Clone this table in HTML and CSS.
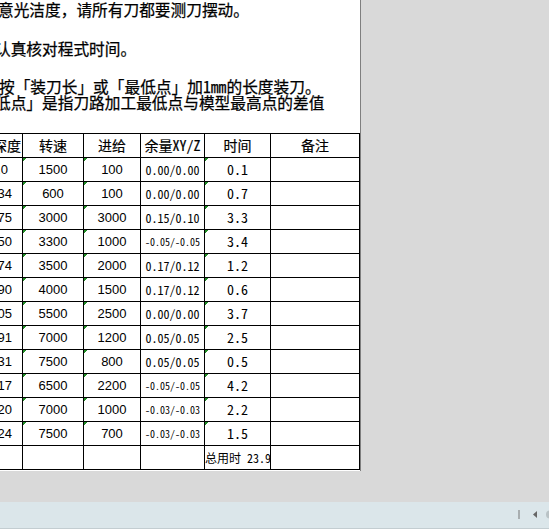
FILE: index.html
```html
<!DOCTYPE html>
<html lang="zh-CN">
<head>
<meta charset="utf-8">
<title>程式单</title>
<link rel="stylesheet" href="styles.css">
</head>
<body>
<div class="app">
  <div class="canvas">
    <div class="page">
      <div class="notes">
        <p class="note l1">意光洁度，请所有刀都要测刀摆动。</p>
        <p class="note l2">认真核对程式时间。</p>
        <p class="note l3">按「装刀长」或「最低点」加1mm的长度装刀。</p>
        <p class="note l4">低点」是指刀路加工最低点与模型最高点的差值</p>
      </div>
      <table class="sheet">
        <colgroup>
          <col class="c1"><col class="c2"><col class="c3"><col class="c4"><col class="c5"><col class="c6">
        </colgroup>
        <thead>
          <tr>
            <th class="first">深度</th><th>转速</th><th>进给</th><th>余量XY/Z</th><th>时间</th><th>备注</th>
          </tr>
        </thead>
        <tbody>
          <tr><td class="first r1">1.0</td><td class="num flag">1500</td><td class="num flag">100</td><td class="mono">0.00/0.00</td><td class="time flag">0.1</td><td></td></tr>
          <tr><td class="first">0.34</td><td class="num flag">600</td><td class="num flag">100</td><td class="mono">0.00/0.00</td><td class="time flag">0.7</td><td></td></tr>
          <tr><td class="first">0.75</td><td class="num flag">3000</td><td class="num flag">3000</td><td class="mono">0.15/0.10</td><td class="time flag">3.3</td><td></td></tr>
          <tr><td class="first">0.50</td><td class="num flag">3300</td><td class="num flag">1000</td><td class="mono small">-0.05/-0.05</td><td class="time flag">3.4</td><td></td></tr>
          <tr><td class="first">0.74</td><td class="num flag">3500</td><td class="num flag">2000</td><td class="mono">0.17/0.12</td><td class="time flag">1.2</td><td></td></tr>
          <tr><td class="first">0.90</td><td class="num flag">4000</td><td class="num flag">1500</td><td class="mono">0.17/0.12</td><td class="time flag">0.6</td><td></td></tr>
          <tr><td class="first">0.05</td><td class="num flag">5500</td><td class="num flag">2500</td><td class="mono">0.00/0.00</td><td class="time flag">3.7</td><td></td></tr>
          <tr><td class="first">0.91</td><td class="num flag">7000</td><td class="num flag">1200</td><td class="mono">0.05/0.05</td><td class="time flag">2.5</td><td></td></tr>
          <tr><td class="first">0.31</td><td class="num flag">7500</td><td class="num flag">800</td><td class="mono">0.05/0.05</td><td class="time flag">0.5</td><td></td></tr>
          <tr><td class="first">0.17</td><td class="num flag">6500</td><td class="num flag">2200</td><td class="mono small">-0.05/-0.05</td><td class="time flag">4.2</td><td></td></tr>
          <tr><td class="first">0.20</td><td class="num flag">7000</td><td class="num flag">1000</td><td class="mono small">-0.03/-0.03</td><td class="time flag">2.2</td><td></td></tr>
          <tr><td class="first">0.24</td><td class="num flag">7500</td><td class="num flag">700</td><td class="mono small">-0.03/-0.03</td><td class="time flag">1.5</td><td></td></tr>
          <tr><td class="first"></td><td></td><td></td><td></td><td class="total">总用时 23.9</td><td></td></tr>
        </tbody>
      </table>
    </div>
  </div>
  <div class="statusbar">
    <span class="sb-sep"></span>
    <svg class="sb-prev" width="4" height="7" viewBox="0 0 4 7"><polygon points="4,0 4,7 0,3.5" fill="#666"/></svg>
    <svg class="sb-next" width="8" height="9" viewBox="0 0 8 9"><circle cx="4" cy="4.5" r="4" fill="#b9c2c5"/></svg>
  </div>
</div>
</body>
</html>
```
FILE: styles.css
```css
html, body {
  margin: 0;
  padding: 0;
}
body {
  width: 549px;
  height: 529px;
  overflow: hidden;
  background: #d9d9d9;
  font-family: "Noto Sans Mono CJK SC", "Noto Sans CJK SC", "Liberation Sans", sans-serif;
  color: #000;
}
.app {
  display: flex;
  flex-direction: column;
  height: 529px;
}
.canvas {
  height: 502px;
  background: #d9d9d9;
}
.page {
  width: 360px;
  height: 471px;
  background: #fff;
  border-right: 1px solid #7f7f7f;
  overflow: hidden;
}
.notes {
  padding-top: 1px;
  height: 133px;
  box-sizing: border-box;
}
.note {
  margin: 0;
  font-size: 15.7px;
  line-height: 18px;
  height: 18px;
  white-space: nowrap;
  -webkit-text-stroke: 0.25px #000;
}
.l1 { margin-left: -2px; }
.l2 { margin-top: 21px; margin-left: -5px; }
.l3 { margin-top: 20px; margin-left: -1px; }
.l4 { margin-top: -2px; margin-left: -5px; }

.sheet {
  margin-left: -39px;
  width: 399px;
  table-layout: fixed;
  border-collapse: separate;
  border-spacing: 1px;
  background: #000;
}
.c1 { width: 60px; }
.c2 { width: 60px; }
.c3 { width: 56px; }
.c4 { width: 63px; }
.c5 { width: 65px; }
.c6 { width: 88px; }
.sheet th, .sheet td {
  background: #fff;
  padding: 0;
  height: 23px;
  line-height: 23px;
  text-align: center;
  white-space: nowrap;
  overflow: hidden;
}
.sheet th {
  font-weight: normal;
  font-size: 14px;
  -webkit-text-stroke: 0.2px #000;
}
.sheet th.first {
  text-align: right;
  padding-right: 1px;
}
.sheet td.first {
  text-align: right;
  padding-right: 10px;
  font-family: "Liberation Sans", sans-serif;
  font-size: 13px;
}
.sheet td.first.r1 { padding-right: 14px; }
.num {
  font-family: "Liberation Sans", sans-serif;
  font-size: 13px;
}
.mono {
  font-size: 12px;
}
.mono.small {
  font-size: 10px;
}
.time {
  font-size: 14px;
}
.sheet td.flag {
  background: linear-gradient(135deg, #1f8b24 0, #1f8b24 2.5px, #fff 2.5px) #fff;
}
.sheet td.total {
  text-align: left;
  font-size: 12px;
  overflow: visible;
}

.statusbar {
  height: 25px;
  background: #dbe6ea;
  border-bottom: 1px solid #c3cdd1;
  padding-bottom: 1px;
  display: flex;
  align-items: center;
  justify-content: flex-end;
  overflow: hidden;
}
.sb-sep {
  width: 2px;
  height: 9px;
  background: #a8aeb0;
  margin-right: 13px;
}
.sb-prev {
  margin-right: 9px;
}
.sb-next {
  margin-right: -5px;
}
```
